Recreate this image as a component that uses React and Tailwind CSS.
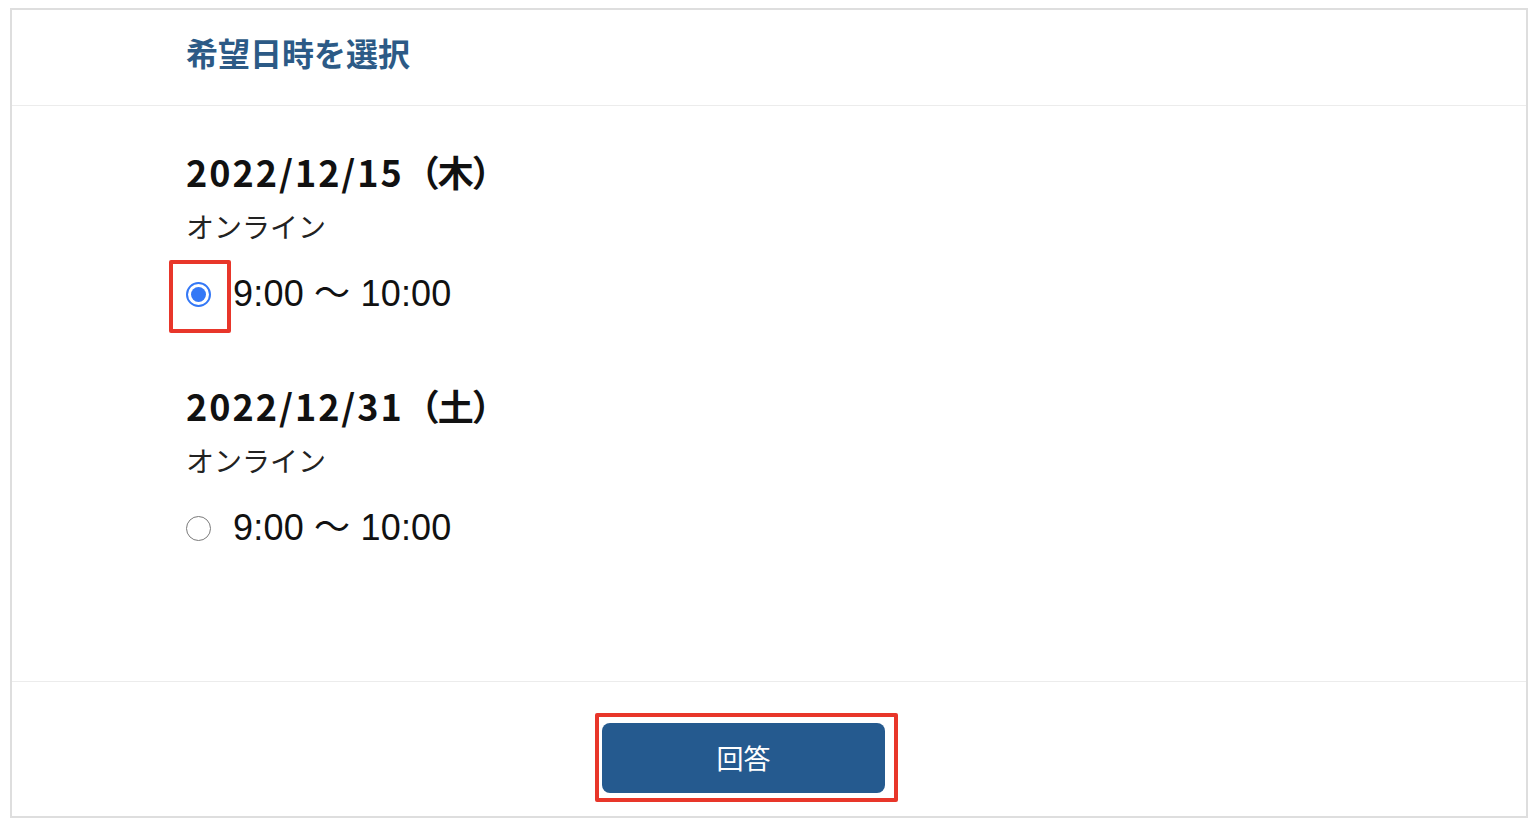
import React from "react";

const jp = { fontFamily: '"Noto Sans CJK JP", "Noto Sans", sans-serif' };

function Radio({ checked }) {
  if (checked) {
    return (
      <span className="flex h-[25px] w-[25px] shrink-0 items-center justify-center rounded-full border-2 border-[#3478f6] bg-white">
        <span className="h-[15px] w-[15px] rounded-full bg-[#3478f6]" />
      </span>
    );
  }
  return <span className="block h-[25px] w-[25px] shrink-0 rounded-full border-[1.5px] border-[#7a7a7a] bg-white" />;
}

function Group({ digits, day, checked }) {
  return (
    <div className="flex flex-col">
      <div className="h-[44px] text-[36px] font-bold leading-[42px] text-[#111]">
        <span className="tracking-[2px]">{digits}</span>
        <span className="tracking-[-2px]">（{day}）</span>
      </div>
      <div className="mt-[14px] h-[36px] text-[28px] leading-[36px] text-[#222]">オンライン</div>
      <label className="mt-[26px] flex h-[48px] items-center gap-[22px]">
        <Radio checked={checked} />
        <span
          className="text-[36px] leading-[48px] tracking-[0.2px] text-[#111]"
          style={{ fontFamily: '"Liberation Sans", "Noto Sans CJK JP", sans-serif' }}
        >
          9:00 ～ 10:00
        </span>
      </label>
    </div>
  );
}

export default function App() {
  return (
    <div className="relative min-h-[828px] bg-white pl-[10px] pr-[8px] pt-[8px]" style={jp}>
      <div className="flex h-[810px] flex-col border-2 border-[#dedede] bg-white">
        <div className="h-[96px] border-b border-[#ececec] pl-[174px] pt-[22px]">
          <h1 className="text-[32px] font-bold leading-[40px] text-[#2c5a86]">希望日時を選択</h1>
        </div>
        <div className="flex h-[575px] flex-col gap-[66px] pl-[174px] pt-[44px]">
          <Group digits="2022/12/15" day="木" checked />
          <Group digits="2022/12/31" day="土" checked={false} />
        </div>
        <div className="flex-1 border-t border-[#ececec] pl-[590px] pt-[41px]">
          <button className="flex h-[70px] w-[283px] items-center justify-center rounded-[8px] bg-[#255a8f] text-[27px] text-white">
            回答
          </button>
        </div>
      </div>
      <div className="pointer-events-none absolute left-[169px] top-[260px] h-[73px] w-[62px] rounded-[2px] border-[4px] border-[#e8362a]" />
      <div className="pointer-events-none absolute left-[595px] top-[713px] h-[89px] w-[303px] rounded-[2px] border-[4px] border-[#e8362a]" />
    </div>
  );
}
